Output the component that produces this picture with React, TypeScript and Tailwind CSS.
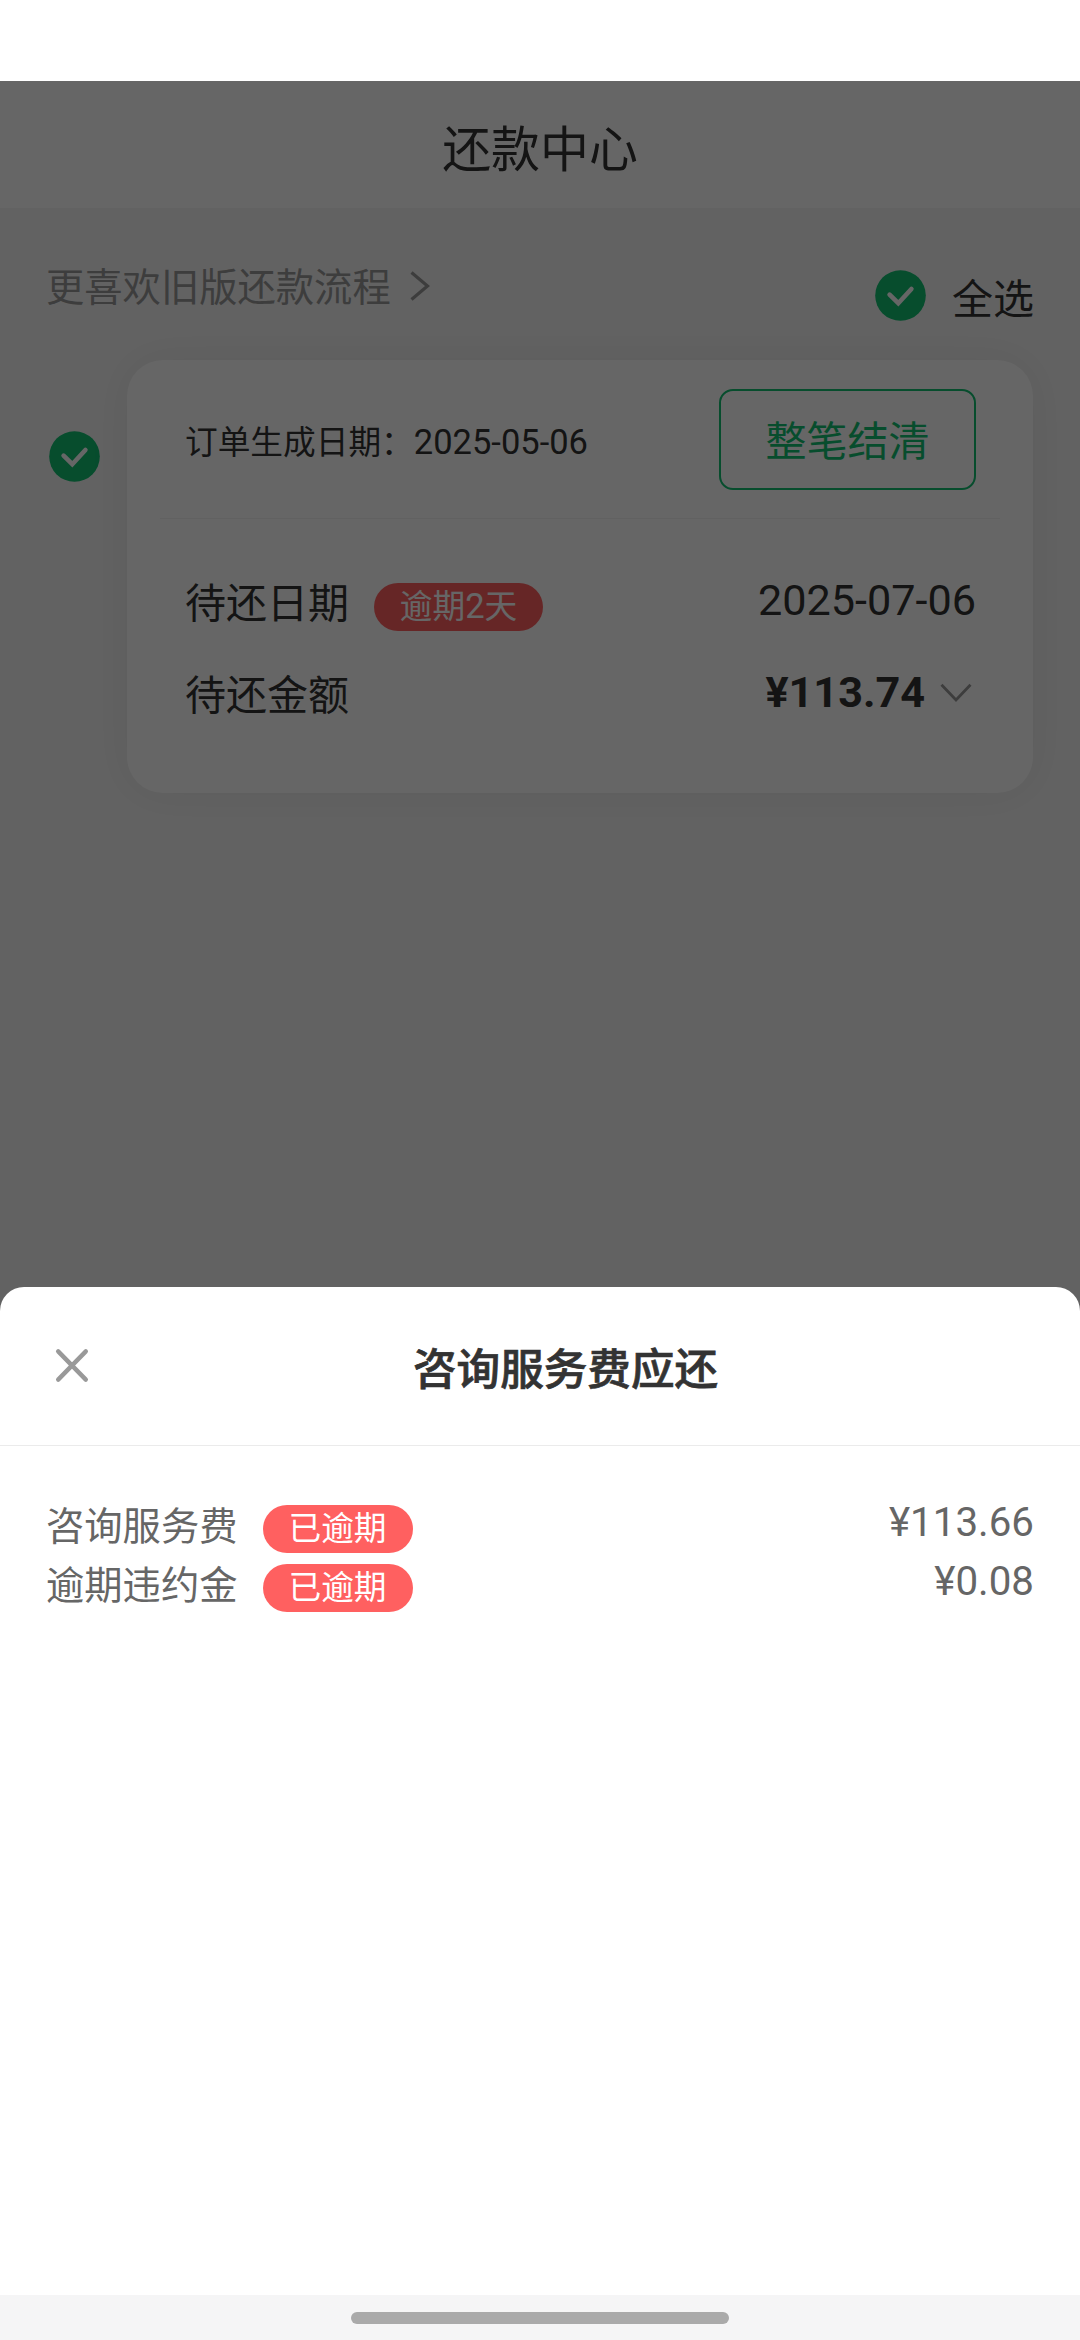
import React from "react";

interface CheckCircleProps {
  className?: string;
}

interface FeeItem {
  label: string;
  tag: string;
  amount: string;
}

const fees: FeeItem[] = [
  { label: "咨询服务费", tag: "已逾期", amount: "¥113.66" },
  { label: "逾期违约金", tag: "已逾期", amount: "¥0.08" },
];

const CheckCircle: React.FC<CheckCircleProps> = ({ className }) => (
  <svg className={className} width="51" height="51" viewBox="0 0 51 51" fill="none">
    <circle cx="25.5" cy="25.5" r="25.3" fill="#12c072" />
    <path d="M14.6 24.6L23.3 33.2L36.4 19" stroke="#fff" strokeWidth="4.6" strokeLinecap="round" />
  </svg>
);

const OrderCard: React.FC = () => (
  <div className="w-[906px] h-[433px] bg-white rounded-[36px] shadow-[0_0_44px_rgba(0,0,0,0.06)] px-[33px]">
    {/* Order date and settle button */}
    <div className="h-[159px] border-b border-[#f2f2f2] flex items-start justify-between pl-[25px] pr-[24px] pt-[29px]">
      <p className="mt-px flex items-baseline leading-[100px] text-[#333]">
        <span className="text-[32.7px]">订单生成日期：</span>
        <span className="font-[Roboto] text-[34.5px]">2025-05-06</span>
      </p>
      <button className="w-[257px] h-[101px] border-2 border-[#12c072] rounded-[14px] text-[#12c072] text-[41px] pb-[2px] leading-[95px]">
        整笔结清
      </button>
    </div>

    {/* Due date */}
    <div className="flex items-start justify-between pl-[25px] pr-[24px] pt-[51px] text-[#333]">
      <div className="flex items-start">
        <span className="text-[41px] leading-[60px]">待还日期</span>
        <span className="ml-[25px] mt-[13px] w-[169px] h-[48px] rounded-full bg-[#ff6060] text-white flex items-baseline justify-center leading-[42px]">
          <span className="text-[32.7px]">逾期</span>
          <span className="text-[34.5px] font-[Roboto]">2</span>
          <span className="text-[32.7px]">天</span>
        </span>
      </div>
      <span className="mt-px font-[Roboto] text-[43.2px] leading-[60px]">2025-07-06</span>
    </div>

    {/* Due amount */}
    <div className="flex items-start justify-between pl-[25px] pr-[28px] pt-[31px] text-[#333]">
      <span className="text-[41px] leading-[60px]">待还金额</span>
      <div className="mt-px flex items-center">
        <span className="font-[Roboto] font-bold text-[43.2px] leading-[60px]">¥113.74</span>
        <svg className="ml-[15px]" width="32" height="20" viewBox="0 0 32 20" fill="none">
          <path d="M1.5 1.8L16 17L30.5 1.8" stroke="#999" strokeWidth="2.8" />
        </svg>
      </div>
    </div>
  </div>
);

const FeeSheet: React.FC = () => (
  <div className="absolute inset-x-0 bottom-0 h-[1008px] bg-white rounded-t-[24px]">
    <div className="h-[159px] border-b border-[#ebebeb] flex items-start">
      <svg className="ml-[55px] mt-[61px]" width="34" height="35" viewBox="0 0 34 35" fill="none">
        <path d="M3.2 3.4L30.8 31.6M30.8 3.4L3.2 31.6" stroke="#999" strokeWidth="4.4" strokeLinecap="round" />
      </svg>
      <h2 className="mt-[47px] ml-[324px] text-[43.6px] leading-[64px] font-medium text-[#333] [-webkit-text-stroke:0.7px_#333]">
        咨询服务费应还
      </h2>
    </div>

    <div className="pt-[54px] pl-[46px] pr-[46px] text-[#666]">
      {fees.map((fee) => (
        <div key={fee.label} className="h-[59px] flex items-start justify-between">
          <div className="flex items-start">
            <span className="text-[38.3px] leading-[48px]">{fee.label}</span>
            <span className="ml-[25px] mt-[5px] w-[150px] h-[48px] rounded-full bg-[#ff6060] text-white text-center text-[32.7px] leading-[42px]">
              {fee.tag}
            </span>
          </div>
          <span className="mt-px font-[Roboto] text-[40.3px] leading-[44px]">{fee.amount}</span>
        </div>
      ))}
    </div>
  </div>
);

const App: React.FC = () => {
  return (
    <div className="w-[1080px] h-[2340px] flex flex-col overflow-hidden bg-white font-['Noto_Sans_CJK_SC',sans-serif]">
      {/* Status bar area */}
      <div className="h-[81px] shrink-0" />

      <div className="relative h-[2214px] shrink-0 bg-[#f5f5f5]">
        <header className="h-[127px] bg-white text-center text-[48.9px] leading-[130px] text-[#333]">
          还款中心
        </header>

        <div className="h-[152px] flex items-start justify-between pl-[46px] pr-[46px]">
          <div className="mt-[47px] flex items-center text-[#999]">
            <span className="text-[38.3px] leading-[60px]">更喜欢旧版还款流程</span>
            <svg className="ml-[18px] mt-[2px]" width="22" height="32" viewBox="0 0 22 32" fill="none">
              <path d="M2.5 2.5L18.5 16L2.5 29.5" stroke="#999" strokeWidth="3.2" />
            </svg>
          </div>
          <div className="mt-[58px] flex items-start">
            <CheckCircle className="mt-[4px]" />
            <span className="ml-[26px] text-[41px] leading-[60px] text-[#333]">全选</span>
          </div>
        </div>

        <div className="flex items-start">
          <CheckCircle className="ml-[49px] mr-[27px] mt-[71px]" />
          <OrderCard />
        </div>

        {/* Mask behind the sheet */}
        <div className="absolute inset-0 bg-black/60" />
        <FeeSheet />
      </div>

      {/* Home indicator */}
      <div className="h-[45px] shrink-0 bg-[#f5f5f6] flex justify-center pt-[17px]">
        <div className="w-[378px] h-[12px] rounded-full bg-[#aaa]" />
      </div>
    </div>
  );
};

export default App;
